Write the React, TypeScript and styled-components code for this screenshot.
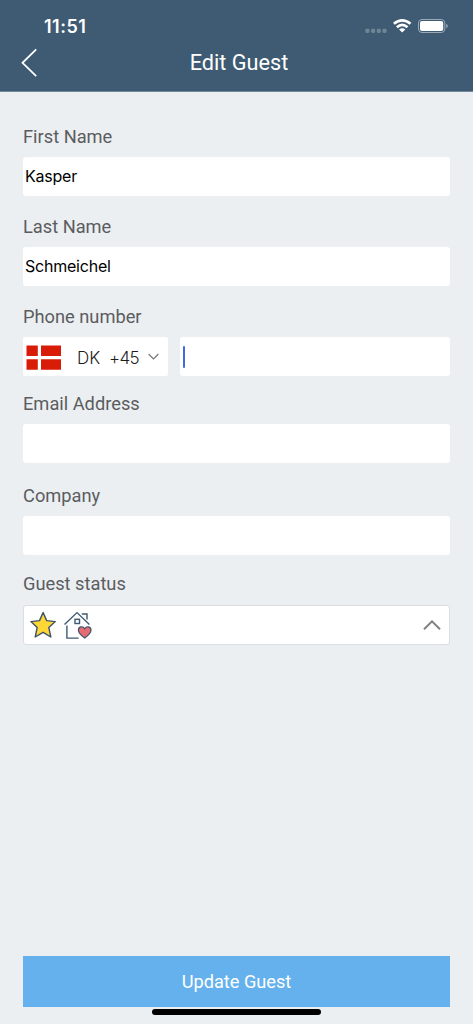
import React from "react";
import styled, { createGlobalStyle } from "styled-components";

const GlobalStyle = createGlobalStyle`
  * { box-sizing: border-box; }
  body { margin: 0; background: #ebeff2; }
`;

const Screen = styled.div`
  display: flex;
  flex-direction: column;
  width: 100%;
  height: 1024px;
  background: #ebeff2;
  font-family: Roboto, sans-serif;
  overflow: hidden;
`;

const Header = styled.header`
  flex: none;
  height: 92px;
  background: #3e5b73;
  border-bottom: 1px solid #71879a;
  color: #fff;
`;

const StatusBar = styled.div`
  display: flex;
  align-items: center;
  justify-content: space-between;
  height: 42px;
  padding: 10px 24px 0 44px;
`;

const Clock = styled.span`
  padding-top: 2px;
  font: 600 18px/22px Inter, sans-serif;
  letter-spacing: 0.5px;
`;

const StatusIcons = styled.div`
  display: flex;
  align-items: center;
  svg { display: block; }
`;

const NavBar = styled.div`
  display: grid;
  grid-template-columns: 44px 1fr 44px;
  align-items: center;
  height: 42px;
  padding: 0 16px 0 21px;
`;

const BackButton = styled.button`
  padding: 0;
  border: 0;
  background: none;
  text-align: left;
  svg { display: block; }
`;

const Title = styled.h1`
  margin: 0;
  text-align: center;
  font-weight: 400;
  font-size: 21.7px;
  line-height: 26px;
`;

const Form = styled.form`
  flex: 1;
  display: flex;
  flex-direction: column;
  padding: 34px 23px 17.5px;
`;

const Field = styled.div<{ $gap?: number; $space?: number }>`
  display: flex;
  flex-direction: column;
  gap: ${(p) => p.$gap ?? 9}px;
  margin-bottom: ${(p) => p.$space ?? 0}px;
`;

const Label = styled.label`
  color: #5b5c5e;
  font-size: 18.25px;
  line-height: 22px;
`;

const Input = styled.input`
  display: block;
  width: 100%;
  min-width: 0;
  height: 39px;
  padding: 0 2px 1px;
  border: 0;
  border-radius: 3px;
  outline: 0;
  background: #fff;
  color: #000;
  font: 400 16px/20px Inter, sans-serif;
  letter-spacing: -0.22px;
`;

const PhoneRow = styled.div`
  display: flex;
  gap: 12px;
`;

const CountrySelect = styled.div`
  display: flex;
  align-items: center;
  flex: none;
  width: 145px;
  height: 39px;
  padding: 1px 8px 0 3px;
  border-radius: 2px;
  background: #fff;
  color: #1c1c1c;
  font: 300 17px/20px Inter, sans-serif;
`;

const Flag = styled.svg`
  flex: none;
  margin-right: 16px;
`;

const Code = styled.span`
  width: 32px;
  padding-top: 2px;
`;

const Dial = styled.span`
  width: 39px;
  padding-top: 2px;
  letter-spacing: -0.6px;
`;

const PhoneInput = styled.div`
  display: flex;
  align-items: center;
  flex: 1;
  height: 39px;
  padding-left: 3px;
  border-radius: 3px;
  background: #fff;
`;

const Caret = styled.span`
  width: 2px;
  height: 22px;
  border-radius: 1px;
  background: #4169e1;
`;

const StatusSelect = styled.div`
  display: flex;
  align-items: center;
  height: 40px;
  padding: 0 8px 0 6px;
  border: 1px solid #d9dee2;
  border-radius: 3px;
  background: #fff;
`;

const StatusIcon = styled.svg`
  flex: none;
  margin-right: 6px;
`;

const Expand = styled.svg`
  margin-left: auto;
`;

const Submit = styled.button`
  flex: none;
  height: 50.5px;
  margin-top: auto;
  padding: 2px 0 0;
  border: 0;
  background: #64b1ed;
  color: #fff;
  font: 400 18.2px/22px Roboto, sans-serif;
`;

const HomeIndicator = styled.div`
  position: absolute;
  top: 1008.7px;
  left: 152px;
  width: 169px;
  height: 6px;
  border-radius: 3px;
  background: #000;
`;

export default function App() {
  return (
    <>
      <GlobalStyle />
      <Screen>
        <Header>
          <StatusBar>
            <Clock>11:51</Clock>
            <StatusIcons>
              <svg width="84" height="18" viewBox="365 17 84 18">
                <g fill="#6f8495">
                  <rect x="365.3" y="28.7" width="4.2" height="4.2" rx="1.4" />
                  <rect x="371" y="28.7" width="4.2" height="4.2" rx="1.4" />
                  <rect x="376.7" y="28.7" width="4.2" height="4.2" rx="1.4" />
                  <rect x="382.4" y="28.7" width="4.2" height="4.2" rx="1.4" />
                </g>
                <g fill="none" stroke="#fff" strokeWidth="2.7">
                  <path d="M393.9 23.7Q402.2 16.9 410.5 23.7" />
                  <path d="M396.9 27.2Q402.2 22.7 407.5 27.2" />
                </g>
                <path d="M399.1 29.5Q402.2 27.1 405.3 29.5L402.2 32.6Z" fill="#fff" />
                <rect x="418.5" y="19.5" width="26.3" height="13" rx="3.5" fill="none" stroke="#9caab6" />
                <rect x="420" y="21" width="23.2" height="10" rx="2" fill="#fff" />
                <path d="M446.2 23.8Q447.8 24.5 447.8 26T446.2 28.2Z" fill="#9caab6" />
              </svg>
            </StatusIcons>
          </StatusBar>
          <NavBar>
            <BackButton type="button" aria-label="Back">
              <svg width="17" height="30" viewBox="0 0 17 30" fill="none" stroke="#fff" strokeWidth="1.8">
                <path d="M15.2 1.3L1.5 14.8L15.2 28.2" />
              </svg>
            </BackButton>
            <Title>Edit Guest</Title>
          </NavBar>
        </Header>
        <Form>
          <Field $space={20.5} $gap={8.5}>
            <Label>First Name</Label>
            <Input defaultValue="Kasper" />
          </Field>
          <Field $space={20}>
            <Label>Last Name</Label>
            <Input defaultValue="Schmeichel" />
          </Field>
          <Field $space={17}>
            <Label>Phone number</Label>
            <PhoneRow>
              <CountrySelect>
                <Flag width="35" height="25" viewBox="0 0 35 25" fill="#d91c08">
                  <path d="M0.5 0.5H11.8V11H0.5ZM15 0.5H35V11H15ZM0.5 14.3H11.8V24.7H0.5ZM15 14.3H35V24.7H15Z" />
                </Flag>
                <Code>DK</Code>
                <Dial>+45</Dial>
                <svg width="11" height="8" viewBox="0 0 11 8" fill="none" stroke="#777" strokeWidth="1.2">
                  <path d="M0.6 1L5.5 5.9L10.4 1" />
                </svg>
              </CountrySelect>
              <PhoneInput>
                <Caret />
              </PhoneInput>
            </PhoneRow>
          </Field>
          <Field $space={21.5}>
            <Label>Email Address</Label>
            <Input />
          </Field>
          <Field $space={18}>
            <Label>Company</Label>
            <Input />
          </Field>
          <Field $gap={10}>
            <Label>Guest status</Label>
            <StatusSelect>
              <StatusIcon width="28" height="30" viewBox="0 0 28 30">
                <path
                  d="M13.1 2.5L16.7 10.6L25.3 11.6L18.8 17.4L20.8 27L13.1 22.3L5.2 27L7.2 17.4L0.9 11.6L9.5 10.6Z"
                  fill="#fcd735"
                  stroke="#3e5368"
                  strokeWidth="1.4"
                  strokeLinejoin="round"
                />
              </StatusIcon>
              <StatusIcon width="30" height="30" viewBox="0 0 30 30">
                <g fill="none" stroke="#3e5b73" strokeWidth="1.4">
                  <path d="M0.5 14.4L13 2.6L25.4 14.4" />
                  <path d="M17.8 4H23V9.6" />
                  <rect x="11" y="9.3" width="4.5" height="4.2" />
                  <path d="M2.9 15.5V28.1H14.6" />
                </g>
                <path
                  d="M20.7 28C17.5 25.8 14.4 23 14.4 20.1C14.4 16.5 18.8 15.5 20.7 18.7C22.6 15.5 27 16.5 27 20.1C27 23 23.9 25.8 20.7 28Z"
                  fill="#e56b73"
                  stroke="#3e5368"
                  strokeWidth="1.2"
                />
              </StatusIcon>
              <Expand width="18" height="12" viewBox="0 0 18 12" fill="none" stroke="#808080" strokeWidth="2">
                <path d="M1 10.2L9 2.3L17 10.2" />
              </Expand>
            </StatusSelect>
          </Field>
          <Submit type="button">Update Guest</Submit>
        </Form>
        <HomeIndicator />
      </Screen>
    </>
  );
}
